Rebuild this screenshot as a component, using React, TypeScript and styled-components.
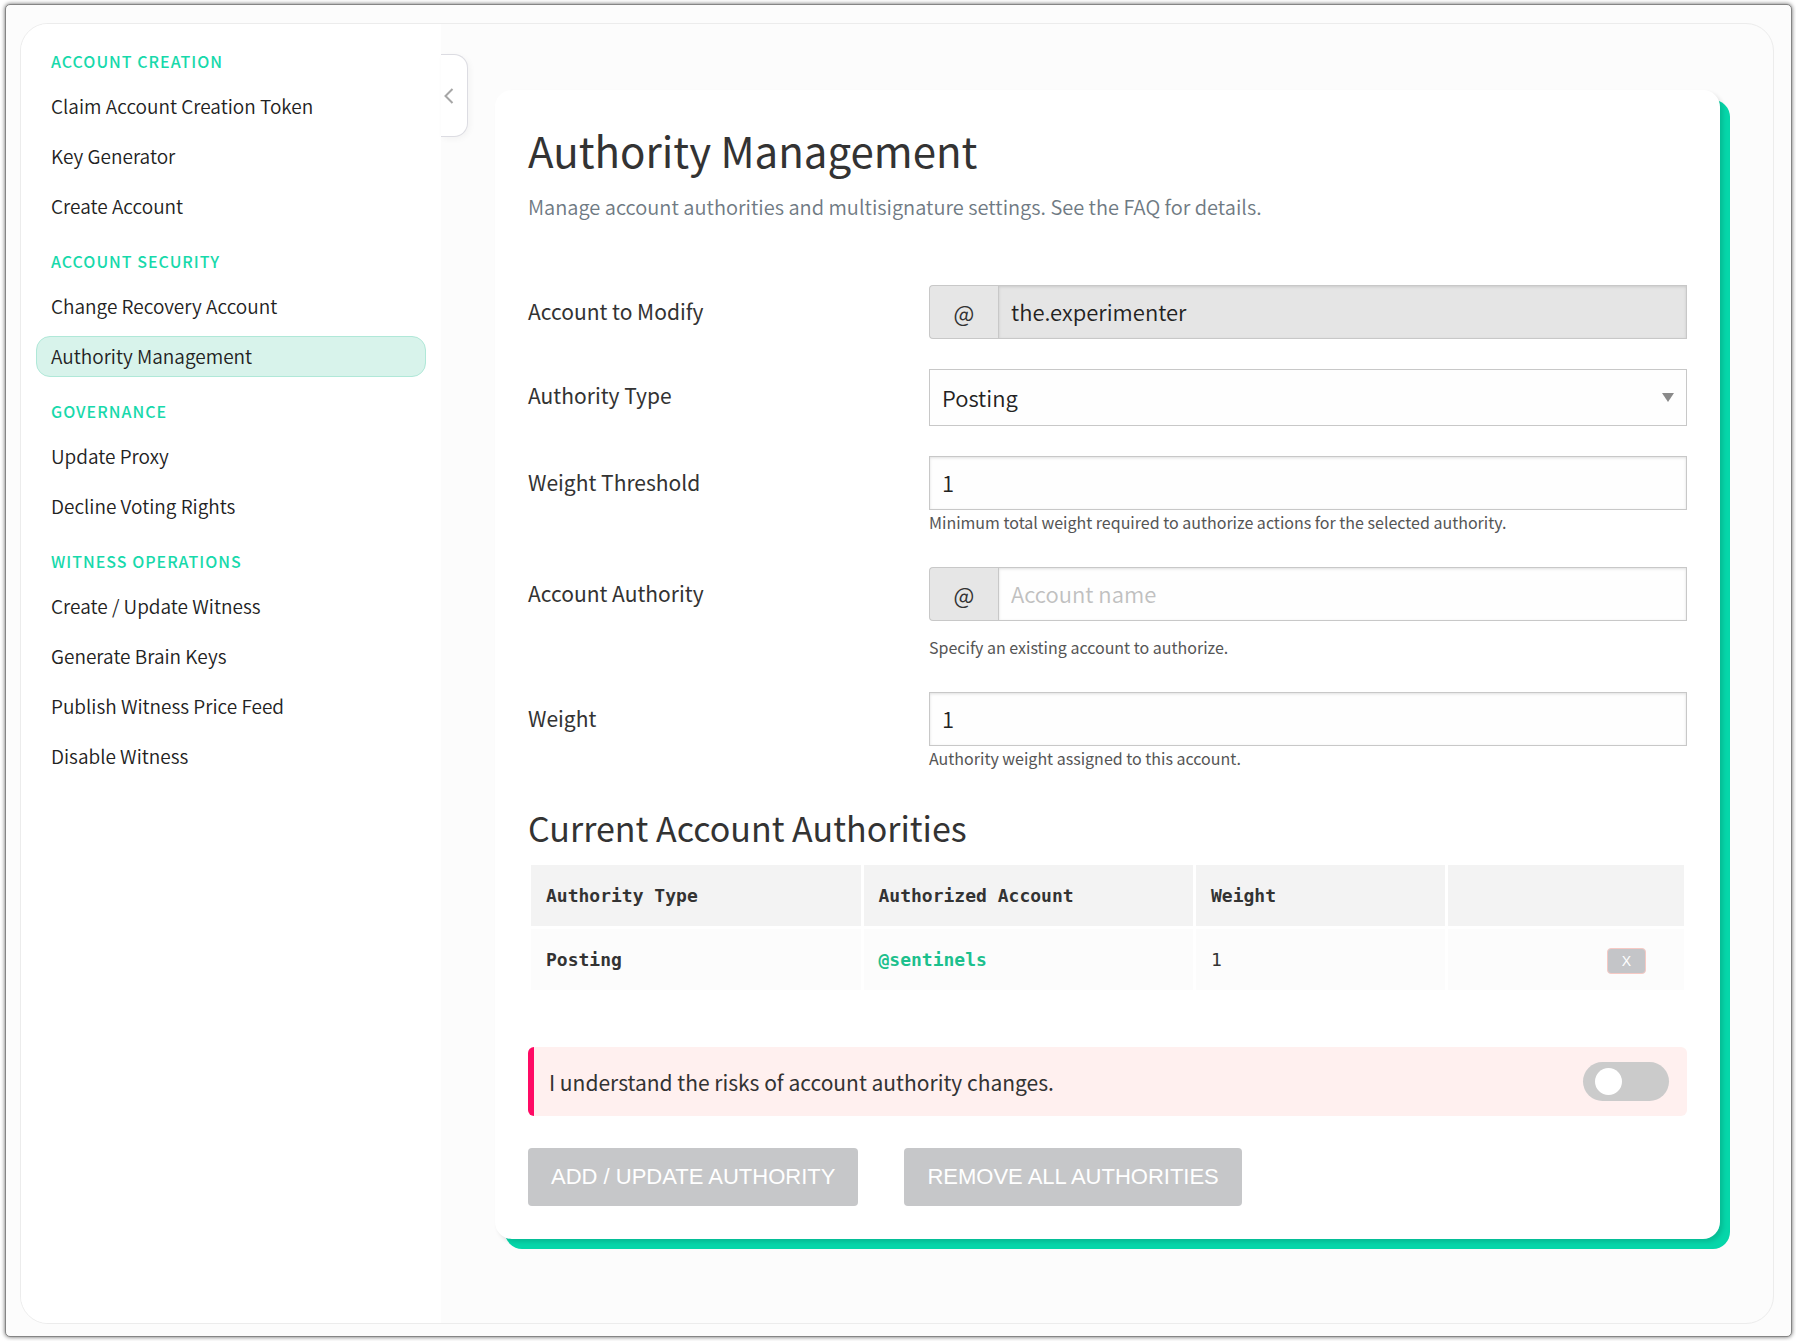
import React from "react";
import styled, { createGlobalStyle, css } from "styled-components";

const sans = `"Source Sans Pro", "Noto Sans CJK SC", "Noto Sans", sans-serif`;
const mono = `"DejaVu Sans Mono", "Liberation Mono", monospace`;

const GlobalStyle = createGlobalStyle`
  *, *::before, *::after { box-sizing: border-box; }
  body {
    margin: 0;
    background: #fff;
    color: #333;
    font-family: ${sans};
  }
`;

const Frame = styled.div`
  display: flex;
  min-height: calc(100vh - 8px);
  margin: 4px 4px 4px 5px;
  padding: 18px 17px 12px 14px;
  background: #fcfcfc;
  border: 1px solid #858585;
  border-radius: 5px;
  box-shadow: 0 0 4px rgba(0, 0, 0, 0.6);
`;

const Panel = styled.div`
  display: flex;
  flex: 1;
  border: 1px solid #ececec;
  border-radius: 28px;
`;

const Sidebar = styled.nav`
  flex: 0 0 420px;
  padding: 8px 15px;
  background: #fff;
  border-radius: 27px 0 0 27px;
`;

const NavHeading = styled.h2`
  margin: 0;
  padding: 19px 15px 11px;
  color: #17d9ab;
  font-size: 16px;
  font-weight: 500;
  line-height: 20px;
  letter-spacing: 1px;
  text-transform: uppercase;
`;

const NavList = styled.ul`
  margin: 0;
  padding: 0;
  list-style: none;
`;

const NavItem = styled.li`
  padding: 4px 0 5px;
`;

const NavLink = styled.a<{ $active: boolean }>`
  display: block;
  padding: 0 14px 2px;
  border: 1px solid transparent;
  border-radius: 14px;
  color: #222;
  font-size: 19px;
  font-weight: 350;
  line-height: 37px;
  text-decoration: none;
  ${({ $active }) =>
    $active &&
    css`
      background: #d8f3eb;
      border-color: #b0e8d8;
    `}
`;

const CollapseButton = styled.button`
  display: flex;
  flex: none;
  align-items: center;
  justify-content: flex-start;
  width: 27px;
  height: 83px;
  margin-top: 30px;
  padding: 0 0 0 3px;
  background: #fff;
  border: 1px solid #dcdce2;
  border-left: 0;
  border-radius: 0 14px 14px 0;
  box-shadow: 2px 2px 6px rgba(0, 0, 0, 0.04);
`;

const Main = styled.main`
  flex: 1;
  min-width: 0;
  padding: 66px 53px 84px 27px;
`;

const Card = styled.form`
  padding: 30px 33px 33px;
  background: #fff;
  border-radius: 17px;
  box-shadow: 3px 3px 4px rgba(0, 0, 0, 0.12), 10px 10px 0 #06d6a9;
`;

const Title = styled.h1`
  margin: 0;
  font-size: 42px;
  font-weight: 400;
  line-height: 60px;
`;

const Subtitle = styled.p`
  margin: 11px 0 62px;
  color: #6f7a83;
  font-size: 20px;
  font-weight: 350;
  line-height: 32px;
`;

const Field = styled.div`
  display: grid;
  grid-template-columns: 401px minmax(0, 1fr);
  align-items: start;
  margin-bottom: 30px;
`;

const Label = styled.label`
  font-size: 21px;
  line-height: 52px;
`;

const control = css`
  width: 100%;
  height: 54px;
  margin: 0;
  padding: 0 12px 2px;
  border: 1px solid #c8c8c8;
  border-radius: 0;
  background: #fefefe;
  color: #222;
  font-family: inherit;
  font-size: 22px;
  font-weight: 350;
  outline: none;
`;

const Input = styled.input`
  ${control}
  flex: 1;
  min-width: 0;
  box-shadow: inset 0 1px 3px rgba(0, 0, 0, 0.12);
  &::placeholder { color: #c0c0c0; opacity: 1; }
  &:disabled { background: #e5e5e5; }
`;

const Select = styled.select`
  ${control}
  height: 57px;
  appearance: none;
  background: #fefefe
    url("data:image/svg+xml;utf8,<svg xmlns='http://www.w3.org/2000/svg' width='12' height='9'><path d='M0 0h12l-6 9z' fill='%238a8a8a'/></svg>")
    no-repeat right 12px center;
`;

const InputGroup = styled.div`
  display: flex;
`;

const Addon = styled.span`
  flex: 0 0 69px;
  border: 1px solid #c8c8c8;
  border-right: 0;
  border-radius: 4px 0 0 4px;
  background: #e6e6e6;
  font-size: 22px;
  line-height: 52px;
  text-align: center;
`;

const Hint = styled.p<{ $spaced?: boolean }>`
  margin: ${({ $spaced }) => ($spaced ? "14px" : "0")} 0 3px;
  color: #555;
  font-size: 16px;
  line-height: 24px;
`;

const SectionTitle = styled.h2`
  margin: 0 0 9px;
  font-size: 34px;
  font-weight: 400;
  line-height: 50px;
`;

const Table = styled.table`
  width: 100%;
  border-spacing: 3px;
  table-layout: fixed;
  font-family: ${mono};
  font-size: 18px;
  line-height: 32px;
  text-align: left;
`;

const HeadCell = styled.th<{ $width?: string }>`
  width: ${({ $width }) => $width ?? "auto"};
  height: 61px;
  padding: 0 15px;
  background: #f3f3f3;
  font-weight: 700;
`;

const Cell = styled.td<{ $strong?: boolean; $end?: boolean }>`
  height: 61px;
  padding: 0 ${({ $end }) => ($end ? "38px" : "15px")} 0 15px;
  background: #fcfcfc;
  font-weight: ${({ $strong }) => ($strong ? 700 : 400)};
  text-align: ${({ $end }) => ($end ? "right" : "left")};
`;

const AccountLink = styled.a`
  color: #1cc08d;
  text-decoration: none;
`;

const RemoveButton = styled.button`
  display: inline-block;
  width: 39px;
  height: 26px;
  padding: 0;
  border: 1px solid #f6c9c4;
  border-radius: 4px;
  background: #c4c5c8;
  color: #fff;
  font-family: "Liberation Sans", Arial, sans-serif;
  font-size: 14px;
  line-height: 24px;
  vertical-align: middle;
`;

const Notice = styled.label`
  display: flex;
  align-items: center;
  justify-content: space-between;
  height: 69px;
  margin-top: 54px;
  padding: 0 18px 0 15px;
  border-left: 6px solid #ff0a64;
  border-radius: 6px;
  background: #fff0ef;
  font-size: 21px;
`;

const Switch = styled.input`
  display: flex;
  align-items: center;
  appearance: none;
  width: 86px;
  height: 39px;
  margin: 0;
  padding: 0 12px;
  border-radius: 20px;
  background: #cbcbcb;
  &::before {
    content: "";
    width: 27px;
    height: 27px;
    border-radius: 50%;
    background: #fff;
  }
  &:checked { justify-content: flex-end; background: #06d6a9; }
`;

const Actions = styled.div`
  display: flex;
  gap: 46px;
  margin-top: 32px;
`;

const ActionButton = styled.button`
  height: 58px;
  padding: 0 23px;
  border: 0;
  border-radius: 4px;
  background: #c6c7c9;
  color: #fff;
  font-family: "Liberation Sans", Arial, sans-serif;
  font-size: 22px;
  text-transform: uppercase;
`;

const sections = [
  { title: "Account Creation", items: ["Claim Account Creation Token", "Key Generator", "Create Account"] },
  { title: "Account Security", items: ["Change Recovery Account", "Authority Management"] },
  { title: "Governance", items: ["Update Proxy", "Decline Voting Rights"] },
  {
    title: "Witness Operations",
    items: ["Create / Update Witness", "Generate Brain Keys", "Publish Witness Price Feed", "Disable Witness"],
  },
];

export default function App() {
  return (
    <>
      <GlobalStyle />
      <Frame>
        <Panel>
          <Sidebar>
            {sections.map((section) => (
              <React.Fragment key={section.title}>
                <NavHeading>{section.title}</NavHeading>
                <NavList>
                  {section.items.map((item) => (
                    <NavItem key={item}>
                      <NavLink href="#" $active={item === "Authority Management"}>
                        {item}
                      </NavLink>
                    </NavItem>
                  ))}
                </NavList>
              </React.Fragment>
            ))}
          </Sidebar>
          <CollapseButton type="button" aria-label="Collapse menu">
            <svg width="10" height="16" viewBox="0 0 10 16" fill="none" stroke="#a6a6a6" strokeWidth="2">
              <path d="M8.5 1 1.5 8l7 7" />
            </svg>
          </CollapseButton>
          <Main>
            <Card onSubmit={(event) => event.preventDefault()}>
              <Title>Authority Management</Title>
              <Subtitle>Manage account authorities and multisignature settings. See the FAQ for details.</Subtitle>

              <Field>
                <Label htmlFor="account">Account to Modify</Label>
                <InputGroup>
                  <Addon>@</Addon>
                  <Input id="account" defaultValue="the.experimenter" disabled />
                </InputGroup>
              </Field>
              <Field>
                <Label htmlFor="type">Authority Type</Label>
                <Select id="type" defaultValue="Posting">
                  <option>Posting</option>
                  <option>Active</option>
                  <option>Owner</option>
                </Select>
              </Field>
              <Field>
                <Label htmlFor="threshold">Weight Threshold</Label>
                <div>
                  <Input id="threshold" defaultValue="1" />
                  <Hint>Minimum total weight required to authorize actions for the selected authority.</Hint>
                </div>
              </Field>
              <Field>
                <Label htmlFor="authority">Account Authority</Label>
                <div>
                  <InputGroup>
                    <Addon>@</Addon>
                    <Input id="authority" placeholder="Account name" />
                  </InputGroup>
                  <Hint $spaced>Specify an existing account to authorize.</Hint>
                </div>
              </Field>
              <Field>
                <Label htmlFor="weight">Weight</Label>
                <div>
                  <Input id="weight" defaultValue="1" />
                  <Hint>Authority weight assigned to this account.</Hint>
                </div>
              </Field>

              <SectionTitle>Current Account Authorities</SectionTitle>
              <Table>
                <thead>
                  <tr>
                    <HeadCell>Authority Type</HeadCell>
                    <HeadCell>Authorized Account</HeadCell>
                    <HeadCell $width="249px">Weight</HeadCell>
                    <HeadCell $width="236px" aria-label="Actions" />
                  </tr>
                </thead>
                <tbody>
                  <tr>
                    <Cell $strong>Posting</Cell>
                    <Cell $strong>
                      <AccountLink href="#">@sentinels</AccountLink>
                    </Cell>
                    <Cell>1</Cell>
                    <Cell $end>
                      <RemoveButton type="button">X</RemoveButton>
                    </Cell>
                  </tr>
                </tbody>
              </Table>

              <Notice>
                I understand the risks of account authority changes.
                <Switch type="checkbox" role="switch" />
              </Notice>
              <Actions>
                <ActionButton type="submit">Add / Update Authority</ActionButton>
                <ActionButton type="button">Remove All Authorities</ActionButton>
              </Actions>
            </Card>
          </Main>
        </Panel>
      </Frame>
    </>
  );
}
